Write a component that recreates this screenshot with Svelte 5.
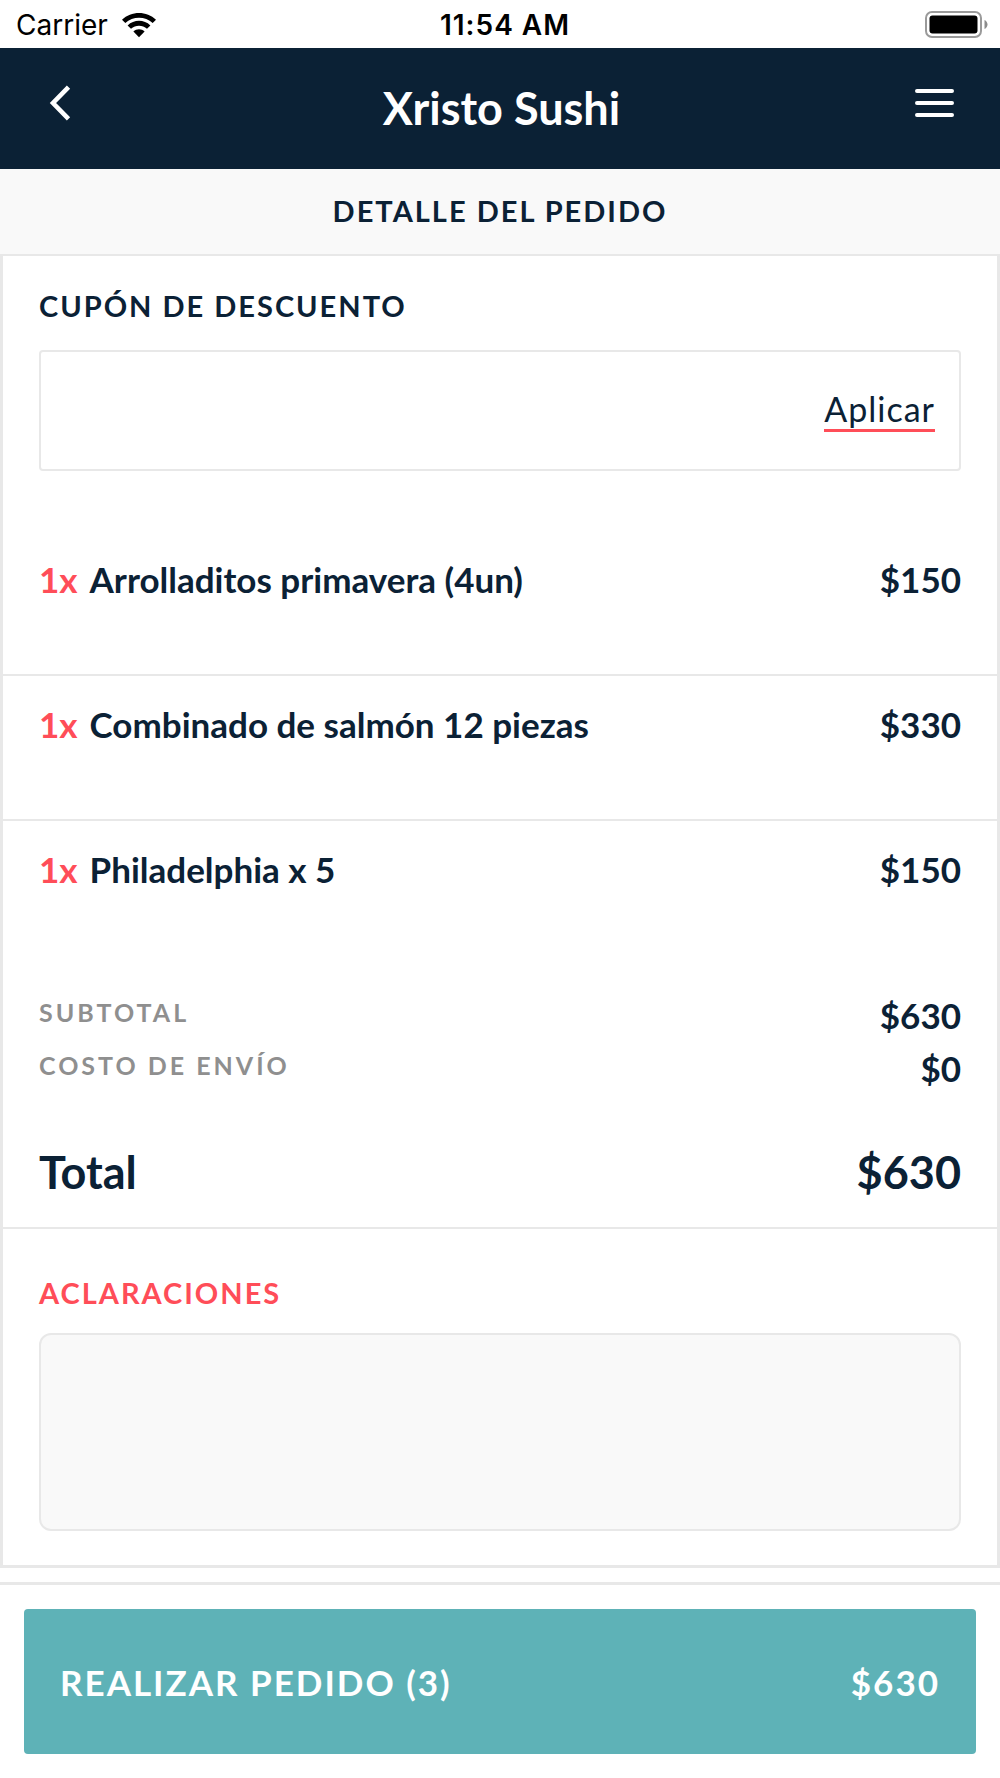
<script lang="ts">
	type Item = {
		quantity: number;
		name: string;
		price: number;
	};

	const restaurant = "Xristo Sushi";
	const shipping = 0;

	const items: Item[] = [
		{ quantity: 1, name: "Arrolladitos primavera (4un)", price: 150 },
		{ quantity: 1, name: "Combinado de salmón 12 piezas", price: 330 },
		{ quantity: 1, name: "Philadelphia x 5", price: 150 }
	];

	let coupon = $state("");
	let notes = $state("");

	const count = items.reduce((sum, item) => sum + item.quantity, 0);
	const subtotal = items.reduce((sum, item) => sum + item.price * item.quantity, 0);
	const total = subtotal + shipping;
</script>

<div class="app">
	<div class="status-bar">
		<div class="carrier">
			<span>Carrier</span>
			<svg width="34" height="25" viewBox="0 0 34 25" aria-hidden="true">
				<path d="M0 6.8C9.2-2.2 24.8-2.2 34 6.8L30.7 10.1C23.2 2.9 10.8 2.9 3.3 10.1Z" />
				<path d="M5.6 12.4C12 6.3 22 6.3 28.4 12.4L25 15.8C20.5 11.6 13.5 11.6 9 15.8Z" />
				<path d="M11.4 18.4C14.5 15.6 19.5 15.6 22.6 18.4L17 24.2Z" />
			</svg>
		</div>
		<span class="time">11:54 AM</span>
		<svg class="battery" width="63" height="28" viewBox="0 0 63 28" aria-hidden="true">
			<rect x="1" y="1" width="55" height="25" rx="6" fill="none" stroke="#9a9a9a" stroke-width="2" />
			<rect x="4.5" y="4.5" width="48" height="18" rx="3" />
			<path d="M59.5 9C63.5 10.8 63.5 16.2 59.5 18Z" fill="#8c8c8c" />
		</svg>
	</div>

	<header class="header">
		<button class="icon-btn" aria-label="Volver">
			<svg width="22" height="36" viewBox="0 0 22 36" fill="none" stroke="#fff" stroke-width="4.6">
				<path d="M19.5 2.2L4 18L19.5 33.8" />
			</svg>
		</button>
		<h1>{restaurant}</h1>
		<button class="icon-btn menu" aria-label="Menú">
			<svg width="39" height="30" viewBox="0 0 39 30" stroke="#fff" stroke-width="4" stroke-linecap="round">
				<path d="M2 3H37M2 15H37M2 27H37" />
			</svg>
		</button>
	</header>

	<h2 class="section-bar">DETALLE DEL PEDIDO</h2>

	<main class="card">
		<section class="coupon">
			<label class="heading" for="coupon">CUPÓN DE DESCUENTO</label>
			<div class="coupon-box">
				<input id="coupon" type="text" bind:value={coupon} />
				<button class="apply">Aplicar</button>
			</div>
		</section>

		<ul class="items">
			{#each items as item}
				<li class="item">
					<span class="quantity">{item.quantity}x</span>
					<span class="name">{item.name}</span>
					<span class="price">${item.price}</span>
				</li>
			{/each}
		</ul>

		<section class="totals">
			<div class="total-row">
				<span class="total-label">SUBTOTAL</span>
				<span class="price">${subtotal}</span>
			</div>
			<div class="total-row">
				<span class="total-label">COSTO DE ENVÍO</span>
				<span class="price">${shipping}</span>
			</div>
			<div class="total-row grand">
				<span>Total</span>
				<span>${total}</span>
			</div>
		</section>

		<section class="notes">
			<label class="heading accent" for="notes">ACLARACIONES</label>
			<textarea id="notes" bind:value={notes}></textarea>
		</section>
	</main>

	<footer class="footer">
		<button class="order-btn">
			<span>REALIZAR PEDIDO ({count})</span>
			<span>${total}</span>
		</button>
	</footer>
</div>

<style>
:global(body) {
	margin: 0;
	background: #fff;
}

.app {
	--navy: #0b2135;
	--red: #ff4d58;
	--teal: #5eb2b7;
	--line: #e8e8e8;
	--soft: #f9f9f9;
	display: flex;
	flex-direction: column;
	min-height: 100vh;
	color: var(--navy);
	font-family: Lato, sans-serif;
	font-size: 35px;
	font-weight: 700;
	line-height: 40px;
}

button,
input,
textarea {
	margin: 0;
	padding: 0;
	border: 0;
	background: none;
	color: inherit;
	font: inherit;
}

button {
	cursor: pointer;
}

.status-bar {
	display: grid;
	grid-template-columns: 1fr auto 1fr;
	align-items: center;
	box-sizing: border-box;
	height: 48px;
	padding: 2px 12px 0 16px;
	color: #000;
	font-family: Inter, sans-serif;
	font-size: 28px;
	font-weight: 600;
}

.carrier {
	display: flex;
	align-items: center;
	gap: 14px;
	font-weight: 400;
}

.time {
	padding-left: 6px;
	letter-spacing: 1px;
}

.battery {
	justify-self: end;
}

.header {
	display: grid;
	grid-template-columns: 1fr auto 1fr;
	align-items: center;
	box-sizing: border-box;
	height: 121px;
	padding: 0 46px 2px 49px;
	background: var(--navy);
	color: #fff;
}

.header h1 {
	margin: 0;
	font-size: 45px;
	font-weight: 700;
	line-height: 54px;
}

.icon-btn {
	display: flex;
	justify-self: start;
	padding-bottom: 10px;
}

.icon-btn.menu {
	justify-self: end;
}

.section-bar {
	margin: 0;
	padding: 23px 0 25px;
	background: var(--soft);
	font-size: 29px;
	font-weight: 700;
	line-height: 37px;
	letter-spacing: 2px;
	text-align: center;
}

.card {
	border: 3px solid var(--line);
	border-top-width: 2px;
}

.heading {
	display: block;
	font-size: 29px;
	line-height: 36px;
	letter-spacing: 2px;
}

.accent {
	color: var(--red);
}

.coupon {
	padding: 32px 36px 60px;
}

.coupon-box {
	display: flex;
	align-items: center;
	box-sizing: border-box;
	height: 121px;
	margin-top: 26px;
	padding: 0 24px;
	border: 2px solid var(--line);
	border-radius: 4px;
}

.coupon-box input {
	flex: 1;
	min-width: 0;
	align-self: stretch;
	outline: none;
}

.apply {
	border-bottom: 3px solid var(--red);
	font-size: 34px;
	font-weight: 400;
	line-height: 40px;
	letter-spacing: 1px;
}

.items {
	margin: 0;
	padding: 0;
	list-style: none;
}

.item {
	display: flex;
	gap: 12px;
	box-sizing: border-box;
	min-height: 145px;
	padding: 28px 36px;
	border-bottom: 2px solid var(--line);
}

.item:last-child {
	border-bottom: 0;
}

.quantity {
	color: var(--red);
}

.name {
	flex: 1;
}

.totals {
	display: flex;
	flex-direction: column;
	gap: 13px;
	padding: 29px 36px 28px;
	border-bottom: 2px solid var(--line);
}

.total-row {
	display: flex;
	justify-content: space-between;
}

.total-label {
	color: #8f8f8f;
	font-size: 25px;
	line-height: 35px;
	letter-spacing: 3px;
}

.grand {
	margin-top: 44px;
	font-size: 45px;
	line-height: 54px;
}

.notes {
	padding: 46px 36px 34px;
}

.notes textarea {
	display: block;
	box-sizing: border-box;
	width: 100%;
	height: 198px;
	margin-top: 22px;
	padding: 20px;
	border: 2px solid var(--line);
	border-radius: 12px;
	background: var(--soft);
	outline: none;
	resize: none;
}

.footer {
	margin-top: 14px;
	padding: 24px;
	border-top: 3px solid var(--line);
}

.order-btn {
	display: flex;
	justify-content: space-between;
	align-items: center;
	width: 100%;
	height: 145px;
	padding: 0 36px;
	border-radius: 4px;
	background: var(--teal);
	color: #fff;
	letter-spacing: 2px;
}
</style>
